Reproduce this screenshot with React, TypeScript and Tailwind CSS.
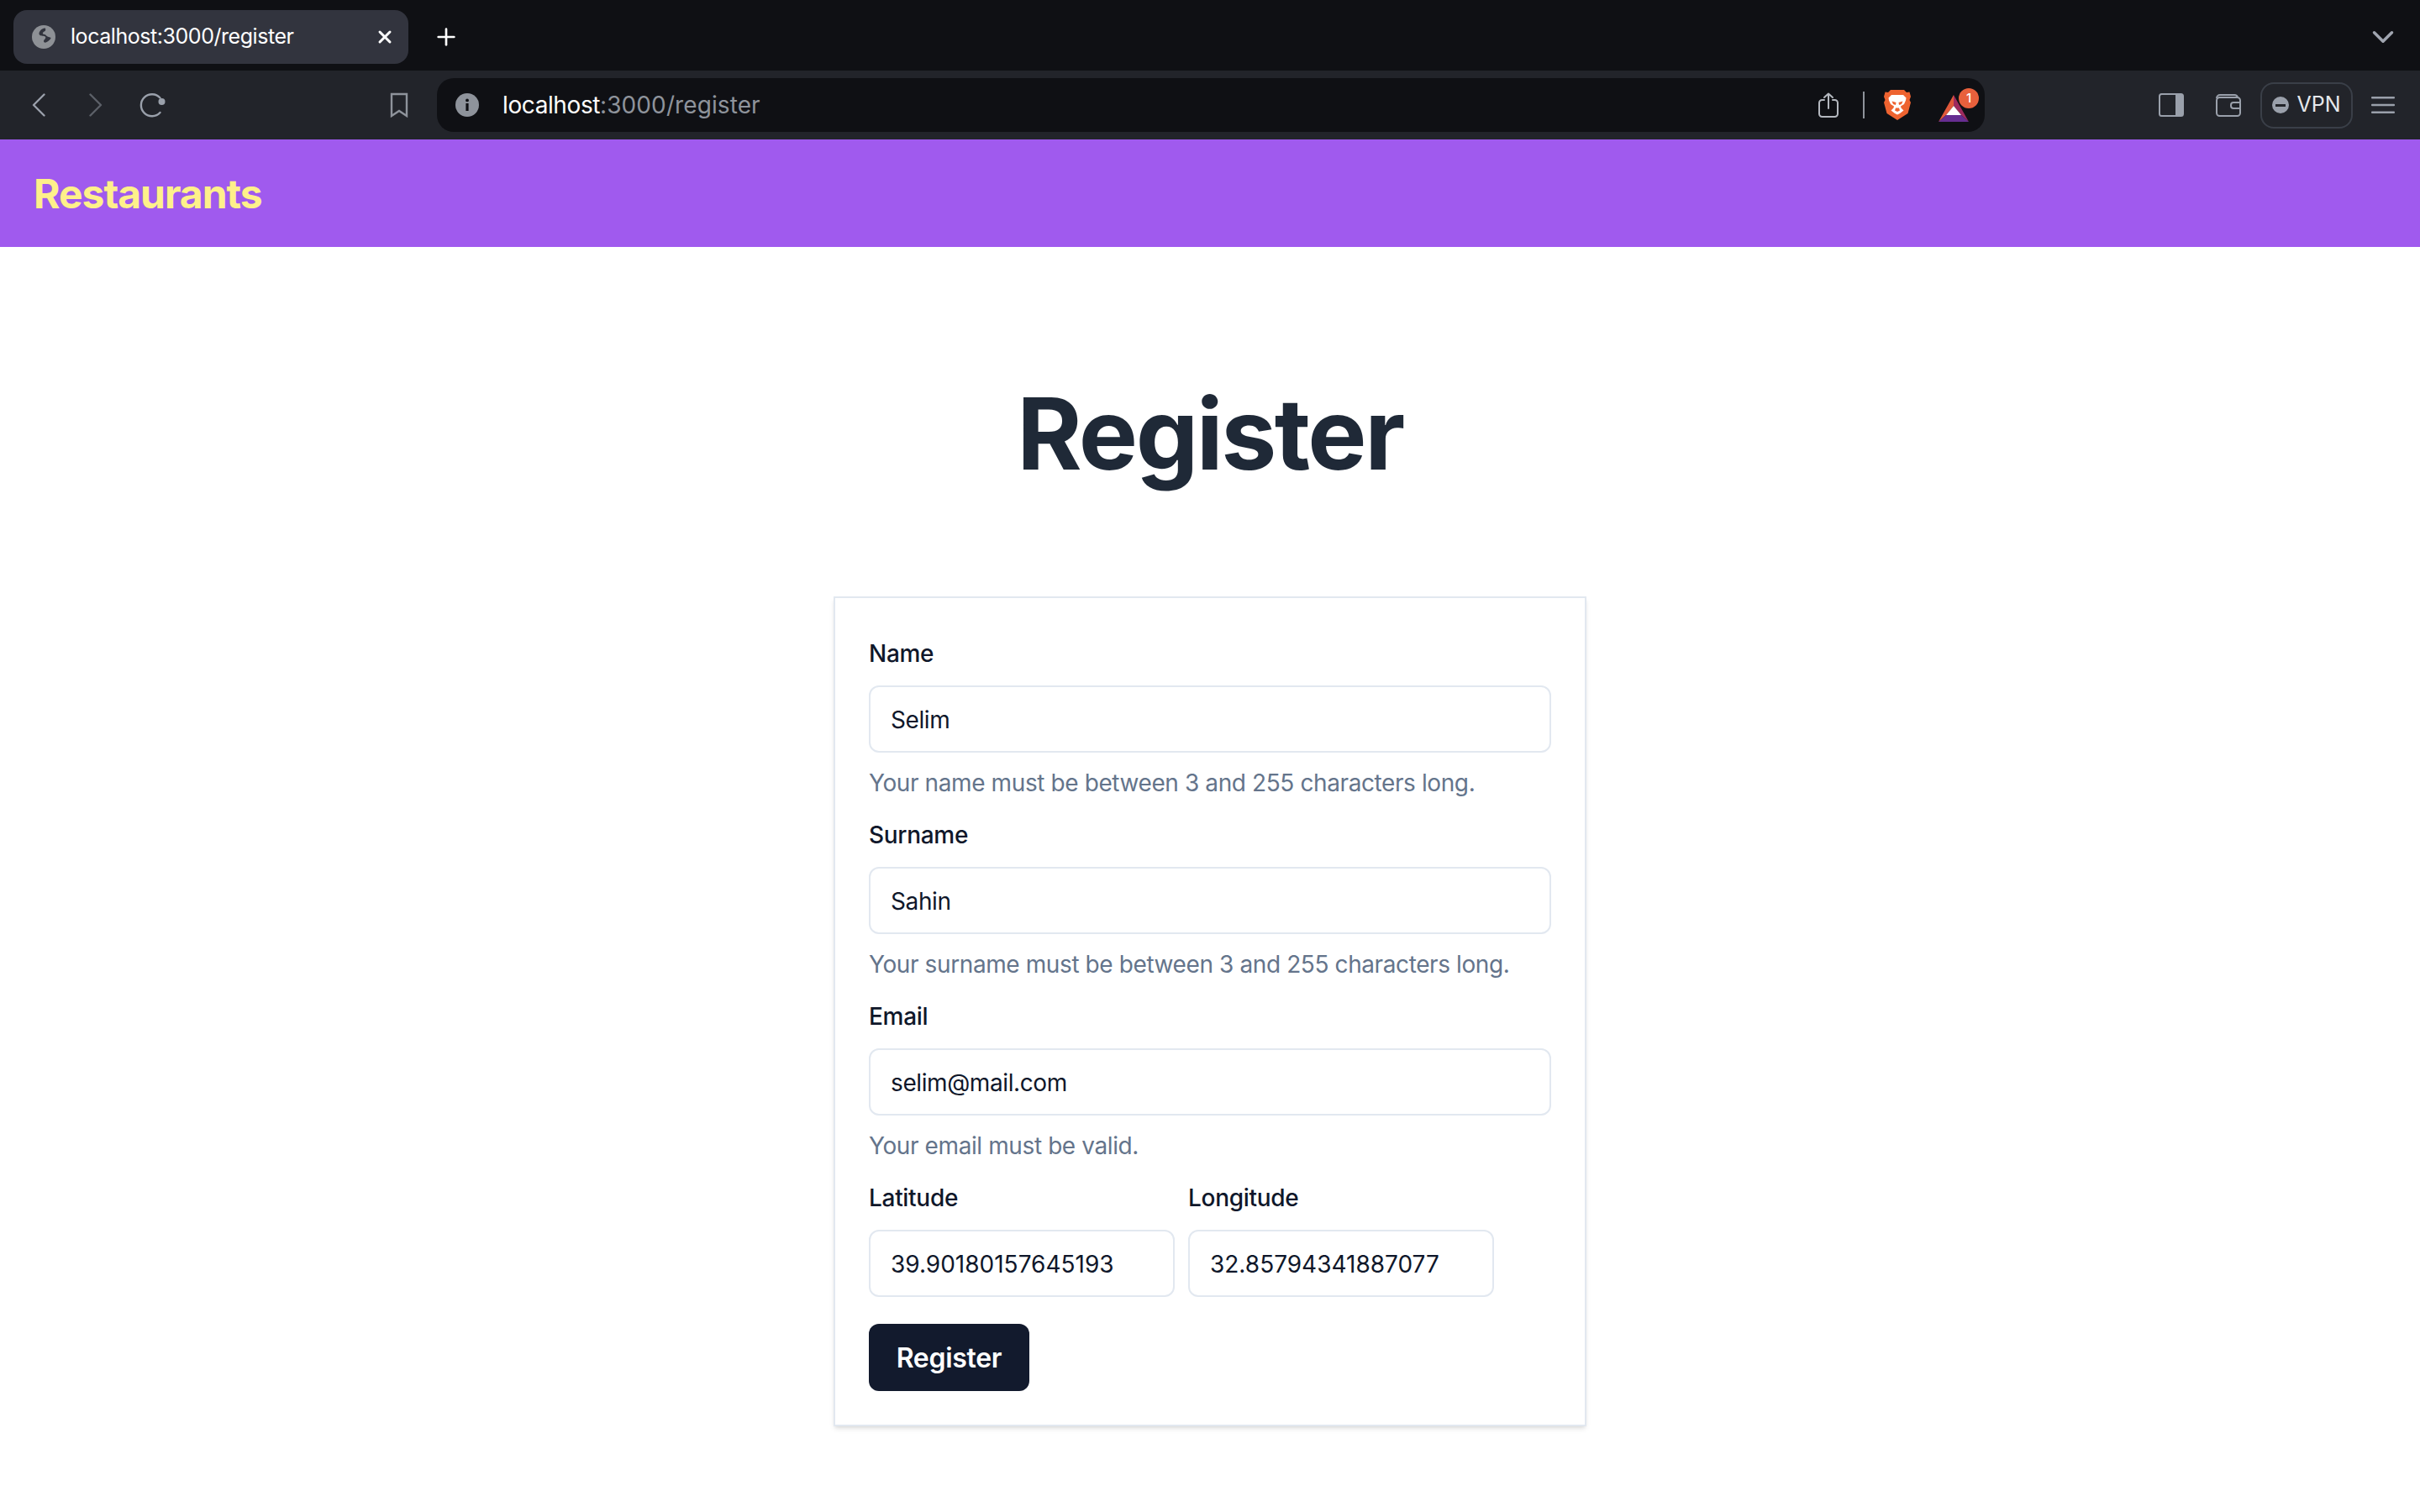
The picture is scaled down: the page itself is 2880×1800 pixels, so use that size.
import { ChevronDown, Plus, X } from "lucide-react";

/* ── Field ───────────────────────────────────────────────────────────── */
function Field({ label, value, help, numeric }: { label: string; value: string; help?: string; numeric?: boolean }) {
  return (
    <div className="flex flex-col">
      <label className="text-[28px] leading-[28px] font-medium tracking-[-0.3px] text-[#0f172a]">{label}</label>
      <input
        readOnly
        value={value}
        className={
          numeric
            ? "mt-6 h-20 w-full rounded-xl border-2 border-[#e2e8f0] bg-white px-6 pt-[2px] text-[28px] text-[#0f172a] outline-none"
            : "mt-6 h-20 w-full rounded-xl border-2 border-[#e2e8f0] bg-white px-6 pt-[2px] text-[28px] tracking-[-0.4px] text-[#0f172a] outline-none"
        }
      />
      {help && <p className="mt-4 text-[28px] leading-10 tracking-[-0.4px] text-[#64748b]">{help}</p>}
    </div>
  );
}

/* ── Icons ───────────────────────────────────────────────────────────── */
function Globe() {
  return (
    <svg viewBox="0 0 28 28" className="h-7 w-7 shrink-0">
      <circle cx="14" cy="14" r="14" fill="#8e9196" />
      <path d="M15 3.5c-3 .6-6 3-6.500 6-.3 2.500 2 3 4 3.200 3 .3 4.500 1 3.500 3-.6 1.200-2 1.500-2 3.300 0 1.600 1.800 2 3.200 1.300 2.500-1.200 4.500-3 5.500-5.300-2.500-1-5-1.500-6-3-.8-1.200-2.800-.7-3.700-1.700-.8-1 .8-2.500 2.500-3.300 1-.5 1-3.700 0-3.500Z" fill="#32343e" />
    </svg>
  );
}

function BookmarkIcon() {
  return (
    <svg viewBox="0 0 22 30" className="h-[30px] w-[22px]" fill="none" stroke="#8e939b" strokeWidth="2.4">
      <path d="M2 2h18v26l-9-6-9 6V2Z" />
    </svg>
  );
}

function InfoIcon() {
  return (
    <svg viewBox="0 0 28 28" className="h-7 w-7 shrink-0">
      <circle cx="14" cy="14" r="14" fill="#8e939b" />
      <rect x="12.400" y="12" width="3.200" height="9" fill="#0f1014" />
      <circle cx="14" cy="8.400" r="1.900" fill="#0f1014" />
    </svg>
  );
}

function BackIcon({ flip, color }: { flip?: boolean; color: string }) {
  return (
    <svg viewBox="0 0 16 28" className={flip ? "h-7 w-4 rotate-180" : "h-7 w-4"} fill="none" stroke={color} strokeWidth="2.400" strokeLinecap="round" strokeLinejoin="round">
      <path d="M14.500 1.500 2 14l12.500 12.500" />
    </svg>
  );
}

function ReloadIcon() {
  return (
    <svg viewBox="0 0 32 30" className="h-[30px] w-8" fill="none">
      <path d="M24.500 6.500A13 13 0 1 0 24.500 24" stroke="#9aa0ab" strokeWidth="2.400" strokeLinecap="round" />
      <circle cx="26.500" cy="11" r="4" fill="#9aa0ab" />
    </svg>
  );
}

function ShareIcon() {
  return (
    <svg viewBox="0 0 24 30" className="h-[30px] w-6" fill="none" stroke="#b4b8bf" strokeWidth="2" strokeLinecap="round" strokeLinejoin="round">
      <path d="M7 9H4.500A3.500 3.500 0 0 0 1 12.500v13A3.500 3.500 0 0 0 4.500 29h15a3.500 3.500 0 0 0 3.500-3.500v-13A3.500 3.500 0 0 0 19.500 9H17" />
      <path d="M12 19V1.500M7 6l5-4.500L17 6" />
    </svg>
  );
}

function BraveLion() {
  return (
    <svg viewBox="0 0 32 36" className="h-9 w-8">
      <path d="M8 0h16l3 3 3.500-.5L32 8l-1.500 4 1.500 3-3.500 13-12.500 8-12.500-8L0 15l1.500-3L0 8l1.500-5.500L5 3l3-3Z" fill="#ee6330" />
      <path d="M9 6h14l3.500 3.500-.5 3-2 4.500-4 2.500.5 2 3 3L19 28l-3 1.500-3-1.500-4.500-3.500 3-3 .5-2-4-2.500-2-4.500-.5-3L9 6Z" fill="#fff" />
      <path d="M9.500 13.500l5 1.500-.5 3-3-1-1.500-3.500Zm13 0-5 1.500.5 3 3-1 1.500-3.500Zm-8.500 8h4l1 3-3 1.500-3-1.500 1-3Z" fill="#ee6330" />
    </svg>
  );
}

function RewardsIcon() {
  return (
    <div className="relative h-10 w-12">
      <svg viewBox="0 0 36 32" className="absolute bottom-0 left-0 h-8 w-9">
        <path d="M18 0 0 32l9-8 9-11V0Z" fill="#e0583a" />
        <path d="M18 0l18 32-9-8-9-11V0Z" fill="#9e2a5e" />
        <path d="M0 32h36l-9-8H9l-9 8Z" fill="#662d91" />
        <path d="M18 13l9 11H9l9-11Z" fill="#fff" />
      </svg>
      <span className="absolute top-0 right-0 flex h-6 w-6 items-center justify-center rounded-full bg-[#e8603c] text-[15px] font-medium text-white">
        1
      </span>
    </div>
  );
}

function SidebarIcon() {
  return (
    <svg viewBox="0 0 30 28" className="h-7 w-[30px]" fill="none">
      <rect x="1" y="1" width="28" height="26" rx="2.500" stroke="#9aa0ab" strokeWidth="2" />
      <path d="M20 1h7a2 2 0 0 1 2 2v22a2 2 0 0 1-2 2h-7V1Z" fill="#9aa0ab" />
    </svg>
  );
}

function WalletIcon() {
  return (
    <svg viewBox="0 0 30 28" className="h-7 w-[30px]" fill="none" stroke="#9aa0ab" strokeWidth="2">
      <path d="M1 6a4 4 0 0 1 4-4h17a4 4 0 0 1 4 3" />
      <rect x="1" y="5" width="28" height="22" rx="3.500" />
      <path d="M29 11h-8a3 3 0 0 0-3 3v1a3 3 0 0 0 3 3h8" />
    </svg>
  );
}

function MenuIcon() {
  return (
    <svg viewBox="0 0 28 20" className="h-5 w-7" fill="#9aa0ab">
      <rect x="0" y="0" width="28" height="2.400" rx="1" />
      <rect x="0" y="8.800" width="28" height="2.400" rx="1" />
      <rect x="0" y="17.600" width="28" height="2.400" rx="1" />
    </svg>
  );
}

/* ── Browser chrome ──────────────────────────────────────────────────── */
function TabBar() {
  return (
    <div className="flex h-[84px] items-start bg-[#0f1014] pt-3 pl-4 pr-[23px]">
      <div className="flex h-16 w-[470px] items-center rounded-2xl bg-[#32343e] pl-[22px] pr-4">
        <Globe />
        <span className="ml-[18px] flex-1 text-[25px] tracking-[-0.45px] text-white">localhost:3000/register</span>
        <X className="h-6 w-6 text-white" strokeWidth={3} />
      </div>
      <Plus className="mt-4 ml-[29px] h-8 w-8 text-white" strokeWidth={2} />
      <div className="flex-1" />
      <ChevronDown className="mt-[11px] h-[42px] w-[42px] text-[#a0a5b0]" strokeWidth={2} />
    </div>
  );
}

function Toolbar() {
  return (
    <div className="flex h-[82px] items-center bg-[#22242a] pl-[38px] pr-[30px]">
      <BackIcon color="#9aa0ab" />
      <div className="ml-[52px]">
        <BackIcon flip color="#5c6068" />
      </div>
      <div className="ml-[44px]">
        <ReloadIcon />
      </div>
      <div className="ml-[266px]">
        <BookmarkIcon />
      </div>
      <div className="ml-[34px] flex h-16 flex-1 items-center rounded-[20px] bg-[#0f1014] pl-[22px] pr-[7px]">
        <InfoIcon />
        <span className="ml-[28px] flex-1 text-[28px] tracking-[0.1px] text-[#8e939b]">
          <span className="tracking-[-0.4px] text-white">localhost</span>:3000/register
        </span>
        <ShareIcon />
        <div className="mr-[23px] ml-[29px] h-8 w-[2px] bg-[#8e939b]" />
        <BraveLion />
        <div className="ml-[33px]">
          <RewardsIcon />
        </div>
      </div>
      <div className="ml-[207px]">
        <SidebarIcon />
      </div>
      <div className="ml-[38px]">
        <WalletIcon />
      </div>
      <div className="ml-[23px] flex h-[55px] w-[110px] items-center justify-center gap-[9px] rounded-2xl border-2 border-[#3a3f48]">
        <span className="flex h-5 w-5 items-center justify-center rounded-full bg-[#9aa0ab]">
          <span className="h-[3px] w-3 bg-[#22242a]" />
        </span>
        <span className="text-[25px] text-[#e6e8ec]">VPN</span>
      </div>
      <div className="ml-[22px]">
        <MenuIcon />
      </div>
    </div>
  );
}

/* ── Page ─────────────────────────────────────────────────────────────── */
export default function App() {
  return (
    <div className="min-h-screen bg-white [font-family:Inter,sans-serif]">
      <TabBar />
      <Toolbar />

      {/* Navbar */}
      <nav className="flex h-32 items-center bg-[#a05aee] px-10 pt-[2px]">
        <span className="text-[48px] font-bold tracking-[-1px] text-[#fef08a]">Restaurants</span>
      </nav>

      <main className="flex flex-col items-center pt-[150px]">
        <h1 className="text-[118px] leading-[144px] font-bold tracking-[-2.500px] text-[#1f2937]">Register</h1>

        {/* Form */}
        <form className="mt-[122px] flex w-[896px] flex-col gap-[28px] border-2 border-[#e2e8f0] px-10 pt-[52px] pb-10 shadow-md">
          <Field label="Name" value="Selim" help="Your name must be between 3 and 255 characters long." />
          <Field label="Surname" value="Sahin" help="Your surname must be between 3 and 255 characters long." />
          <Field label="Email" value="selim@mail.com" help="Your email must be valid." />
          <div className="flex gap-4">
            <div className="w-[364px]">
              <Field label="Latitude" value="39.90180157645193" numeric />
            </div>
            <div className="w-[364px]">
              <Field label="Longitude" value="32.85794341887077" numeric />
            </div>
          </div>
          <div className="mt-1">
            <button type="button" className="h-20 w-[191px] rounded-xl bg-[#121a2d] pt-[2px] text-[32px] font-semibold tracking-[-0.3px] text-white">
              Register
            </button>
          </div>
        </form>
      </main>
    </div>
  );
}
